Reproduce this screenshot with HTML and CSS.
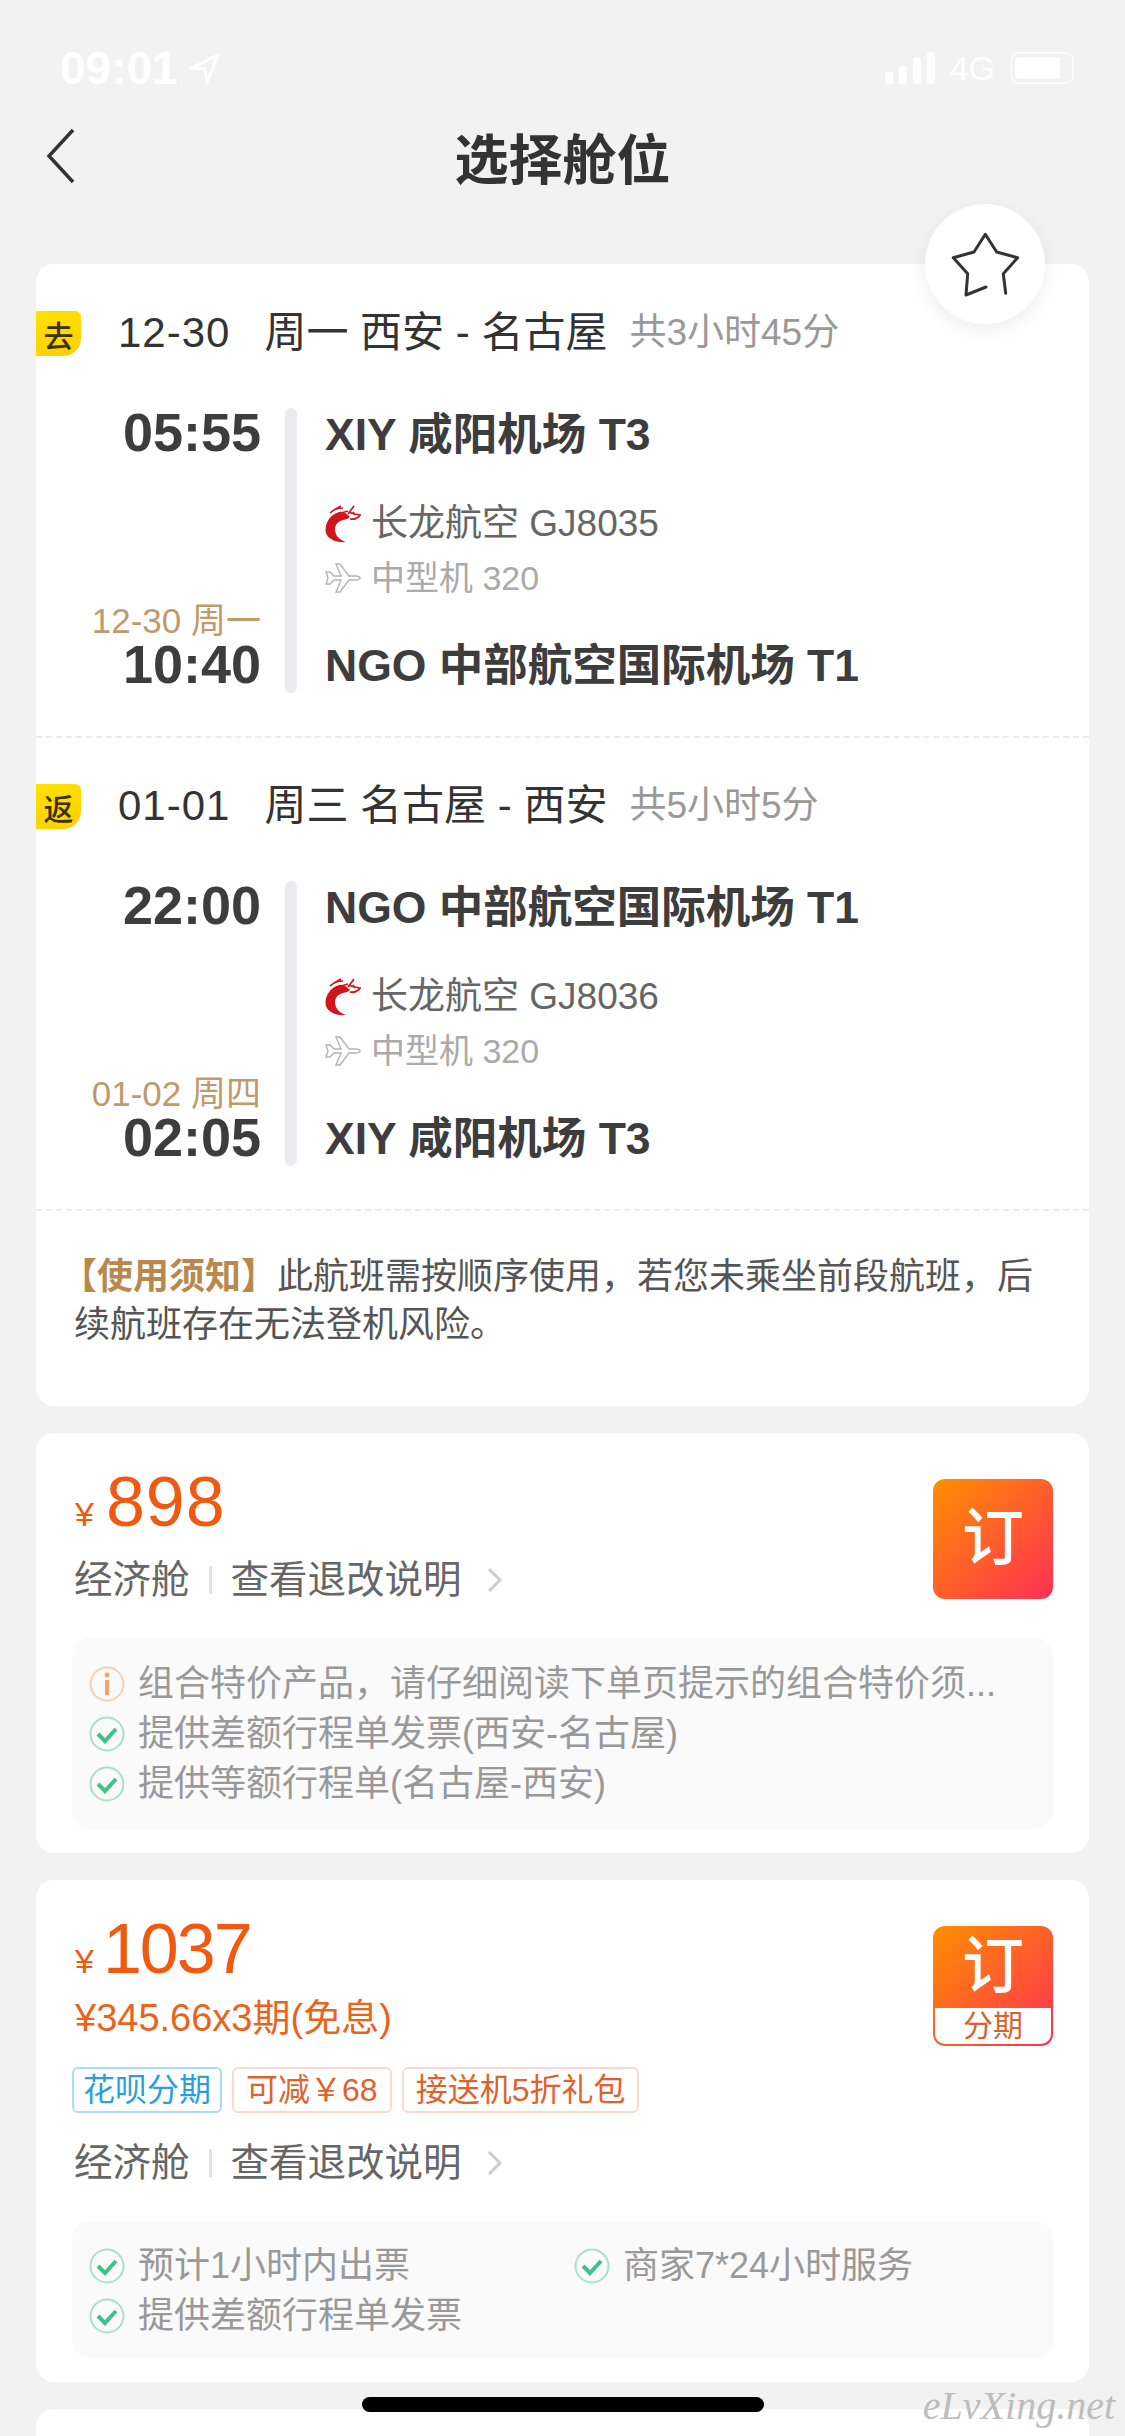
FILE: index.html
```html
<!DOCTYPE html>
<html lang="zh-CN">
<head>
    <meta charset="UTF-8">
    <meta name="viewport" content="width=device-width, initial-scale=1.0">
    <title>选择舱位</title>
    <link rel="stylesheet" href="styles.css">
</head>
<body>
    <svg class="defs" width="0" height="0">
        <symbol id="check" viewBox="0 0 36 40">
            <circle cx="18" cy="20" r="16.5" fill="none" stroke="#a9e0c9" stroke-width="2"/>
            <path d="M9 20l7 7 11-12" fill="none" stroke="#3fc08c" stroke-width="4"/>
        </symbol>
        <symbol id="logo" viewBox="0 0 36 38">
            <path d="M14 7C4 10-1 20 1 28c2 6 10 10 20 9-7-2-11-7-11-13 0-5 4-8 8-9 3-1 5-1 7-3-3-3-7-6-11-5z" fill="#d2141c"/>
            <path d="M5 8c3-3 8-5 13-5M9 5l7-4M16 8l7-2M23 9l6-8M24 7c3 2 7 2 11 3-1 2-5 5-10 4M28 7l2 3" fill="none" stroke="#d2141c" stroke-width="1.7"/>
        </symbol>
        <symbol id="plane" viewBox="0 0 36 30">
            <path d="M1 9l4 0 4 4 7 0-5-12 4 0 9 12 6 0c3 0 5 1 5 2s-2 2-5 2l-6 0-9 12-4 0 5-12-7 0-4 4-4 0 2-6z" fill="none" stroke="#b4b4b4" stroke-width="1.4"/>
        </symbol>
        <symbol id="chevron" viewBox="0 0 16 26">
            <path d="M2 2l11 11-11 11" fill="none" stroke="#ccc" stroke-width="3"/>
        </symbol>
    </svg>

    <div class="page">
        <div class="status-bar">
            <div class="status-left">
                <span class="clock">09:01</span>
                <svg width="32" height="32" viewBox="0 0 32 32"><path d="M29 3L3 16l13 1 2 13z" fill="none" stroke="#fff" stroke-width="3"/></svg>
            </div>
            <div class="status-right">
                <div class="signal"><i></i><i></i><i></i><i></i></div>
                <span class="network">4G</span>
                <div class="battery"><b></b></div>
            </div>
        </div>

        <header class="nav">
            <svg class="back" width="30" height="56" viewBox="0 0 30 56"><path d="M27 2L3 28l24 26" fill="none" stroke="#333" stroke-width="3.5"/></svg>
            <h1>选择舱位</h1>
        </header>

        <div class="fav">
            <svg width="71" height="67" viewBox="0 0 71 67"><path d="M36 56L16 64l1.700-21.300L3.300 26.700 24 21 35.300 3.300 46.700 21l21 5.700-14.400 16 2.400 19.600" fill="none" stroke="#333" stroke-width="3" stroke-linejoin="round" stroke-linecap="round"/></svg>
        </div>

        <section class="card trip">
            <div class="leg">
                <div class="leg-head">
                    <span class="leg-tag">去</span>
                    <span class="leg-date">12-30<span class="leg-week">周一 西安 - 名古屋</span></span>
                    <span class="leg-total">共3小时45分</span>
                </div>
                <div class="flight">
                    <div class="times">
                        <div class="time">05:55</div>
                        <div class="arrive">
                            <div class="arrive-date">12-30 周一</div>
                            <div class="time">10:40</div>
                        </div>
                    </div>
                    <div class="bar"></div>
                    <div class="route">
                        <div class="airport">XIY 咸阳机场 T3</div>
                        <div class="airline"><svg class="row-icon"><use href="#logo"/></svg>长龙航空 GJ8035</div>
                        <div class="aircraft"><svg class="row-icon plane"><use href="#plane"/></svg>中型机 320</div>
                        <div class="airport last">NGO 中部航空国际机场 T1</div>
                    </div>
                </div>
            </div>
            <div class="leg">
                <div class="leg-head">
                    <span class="leg-tag">返</span>
                    <span class="leg-date">01-01<span class="leg-week">周三 名古屋 - 西安</span></span>
                    <span class="leg-total">共5小时5分</span>
                </div>
                <div class="flight">
                    <div class="times">
                        <div class="time">22:00</div>
                        <div class="arrive">
                            <div class="arrive-date">01-02 周四</div>
                            <div class="time">02:05</div>
                        </div>
                    </div>
                    <div class="bar"></div>
                    <div class="route">
                        <div class="airport">NGO 中部航空国际机场 T1</div>
                        <div class="airline"><svg class="row-icon"><use href="#logo"/></svg>长龙航空 GJ8036</div>
                        <div class="aircraft"><svg class="row-icon plane"><use href="#plane"/></svg>中型机 320</div>
                        <div class="airport last">XIY 咸阳机场 T3</div>
                    </div>
                </div>
            </div>
            <p class="notice"><strong>【使用须知】</strong>此航班需按顺序使用，若您未乘坐前段航班，后续航班存在无法登机风险。</p>
        </section>

        <section class="card fare">
            <div class="fare-main">
                <div class="fare-info">
                    <div class="price"><span class="yen">¥</span>898</div>
                    <div class="cabin">
                        <span>经济舱</span><i class="sep"></i><span>查看退改说明</span><svg class="chevron"><use href="#chevron"/></svg>
                    </div>
                </div>
                <div class="book"><div class="book-main">订</div></div>
            </div>
            <div class="perks">
                <div class="perk">
                    <svg class="perk-icon" viewBox="0 0 36 40"><circle cx="18" cy="20" r="16.5" fill="none" stroke="#f6cfae" stroke-width="2"/><circle cx="18" cy="11" r="2.4" fill="#f2a46a"/><rect x="16" y="16" width="4" height="15" fill="#f2a46a"/></svg>
                    组合特价产品，请仔细阅读下单页提示的组合特价须...
                </div>
                <div class="perk"><svg class="perk-icon"><use href="#check"/></svg>提供差额行程单发票(西安-名古屋)</div>
                <div class="perk"><svg class="perk-icon"><use href="#check"/></svg>提供等额行程单(名古屋-西安)</div>
            </div>
        </section>

        <section class="card fare">
            <div class="fare-main">
                <div class="fare-info">
                    <div class="price tight"><span class="yen">¥</span>1037</div>
                    <div class="installment">¥345.66x3期(免息)</div>
                    <div class="tags">
                        <span class="tag blue">花呗分期</span>
                        <span class="tag">可减￥68</span>
                        <span class="tag">接送机5折礼包</span>
                    </div>
                    <div class="cabin">
                        <span>经济舱</span><i class="sep"></i><span>查看退改说明</span><svg class="chevron"><use href="#chevron"/></svg>
                    </div>
                </div>
                <div class="book">
                    <div class="book-main short">订</div>
                    <div class="book-sub">分期</div>
                </div>
            </div>
            <div class="perks two-col">
                <div class="perk"><svg class="perk-icon"><use href="#check"/></svg>预计1小时内出票</div>
                <div class="perk"><svg class="perk-icon"><use href="#check"/></svg>商家7*24小时服务</div>
                <div class="perk"><svg class="perk-icon"><use href="#check"/></svg>提供差额行程单发票</div>
            </div>
        </section>

        <section class="card next"></section>

        <div class="home-bar"></div>
        <div class="watermark">eLvXing.net</div>
    </div>
</body>
</html>
```
FILE: styles.css
```css
* {
    box-sizing: border-box;
}
html, body {
    margin: 0;
    padding: 0;
}
body {
    font-family: "Liberation Sans", "Noto Sans CJK SC", sans-serif;
    background-color: #f2f2f2;
    color: #333;
}
.defs {
    position: absolute;
}
.page {
    position: relative;
    width: 1125px;
    height: 2436px;
    overflow: hidden;
    padding: 0 36px;
}

/* status bar */
.status-bar {
    display: flex;
    justify-content: space-between;
    align-items: center;
    height: 110px;
    padding: 26px 15px 0 24px;
    color: #fff;
}
.status-left, .status-right {
    display: flex;
    align-items: center;
}
.status-left svg {
    margin-left: 11px;
}
.clock {
    font-size: 46px;
    font-weight: 700;
}
.signal {
    display: flex;
    align-items: flex-end;
    gap: 6px;
    height: 32px;
}
.signal i {
    display: block;
    width: 8px;
    background-color: #fff;
    border-radius: 2px;
}
.signal i:nth-child(1) { height: 12px; }
.signal i:nth-child(2) { height: 18px; }
.signal i:nth-child(3) { height: 26px; }
.signal i:nth-child(4) { height: 32px; }
.network {
    font-size: 34px;
    margin: 0 15px;
}
.battery {
    position: relative;
    width: 64px;
    height: 32px;
    border: 2px solid rgba(255, 255, 255, 0.6);
    border-radius: 8px;
    padding: 3px;
}
.battery b {
    display: block;
    width: 45px;
    height: 100%;
    background-color: #fff;
    border-radius: 3px;
}

/* nav */
.nav {
    display: grid;
    grid-template-columns: 1fr auto 1fr;
    align-items: center;
    height: 100px;
    margin: 0 -36px;
    padding: 0 46px;
}
.back {
    margin-top: -8px;
}
.nav h1 {
    margin: 0;
    padding-top: 3px;
    font-size: 54px;
    line-height: 97px;
    font-weight: 700;
    color: #333;
}
.fav {
    position: absolute;
    left: 925px;
    top: 204px;
    width: 120px;
    height: 120px;
    display: flex;
    align-items: center;
    justify-content: center;
    background-color: #fff;
    border-radius: 50%;
    box-shadow: 0 6px 18px rgba(0, 0, 0, 0.07);
    z-index: 2;
}

/* cards */
.card {
    background-color: #fff;
    border-radius: 18px;
    margin-top: 54px;
}
.card + .card {
    margin-top: 27px;
}

/* trip summary */
.trip {
    padding-top: 47px;
}
.leg {
    padding-bottom: 43px;
    margin-bottom: 46px;
    border-bottom: 2px dashed #ececec;
}
.leg-head {
    display: flex;
    align-items: center;
    height: 45px;
}
.leg-tag {
    width: 45px;
    height: 45px;
    margin-right: 37px;
    display: flex;
    align-items: center;
    justify-content: center;
    font-size: 30px;
    font-weight: 500;
    color: #3a3000;
    background: linear-gradient(160deg, #ffe100, #ffcf00);
    border-radius: 0 6px 18px 0;
}
.leg-date {
    margin-top: -10px;
    font-size: 42px;
    letter-spacing: 1px;
    color: #333;
    white-space: nowrap;
}
.leg-week {
    margin-left: 34px;
    letter-spacing: 0;
}
.leg-total {
    margin: -10px 0 0 22px;
    font-size: 37px;
    color: #999;
}
.flight {
    display: flex;
    height: 285px;
    margin-top: 52px;
}
.times {
    display: flex;
    flex-direction: column;
    justify-content: space-between;
    width: 225px;
    padding-bottom: 5px;
    text-align: right;
}
.time {
    font-size: 54px;
    line-height: 48px;
    font-weight: 700;
    color: #3d3d3d;
}
.arrive-date {
    font-size: 35px;
    line-height: 38px;
    color: #c09a6b;
}
.bar {
    width: 12px;
    margin: 0 28px 0 24px;
    background-color: #e9ebef;
    border-radius: 6px;
}
.route {
    flex: 1;
    display: flex;
    flex-direction: column;
    padding: 2px 0;
}
.airport {
    font-size: 44.500px;
    line-height: 50px;
    font-weight: 700;
    color: #3d3d3d;
    white-space: nowrap;
}
.airport.last {
    margin-top: auto;
}
.airline, .aircraft {
    display: flex;
    align-items: center;
    line-height: 54px;
    white-space: nowrap;
}
.airline {
    margin-top: 37px;
    font-size: 37px;
    color: #666;
}
.aircraft {
    font-size: 34px;
    color: #aaa;
}
.row-icon {
    width: 36px;
    height: 38px;
    margin-right: 10px;
}
.row-icon.plane {
    height: 30px;
}
.notice {
    margin: -4px 36px 0 38px;
    padding-bottom: 57px;
    font-size: 36px;
    line-height: 48px;
    color: #555;
}
.notice strong {
    display: inline-block;
    margin-left: -13px;
    color: #b9884d;
}

/* fares */
.fare {
    padding: 27px 36px 24px;
}
.fare-main {
    display: flex;
    justify-content: space-between;
    align-items: flex-start;
}
.fare-info {
    flex: 1;
}
.price {
    margin-left: 3px;
    padding-top: 2px;
    font-size: 70px;
    line-height: 80px;
    letter-spacing: 1px;
    color: #f0590f;
}
.price.tight {
    letter-spacing: -2px;
}
.yen {
    font-size: 34px;
    line-height: 1;
    margin-right: 11px;
}
.book {
    width: 120px;
    height: 120px;
    margin-top: 19px;
    border-radius: 12px;
    overflow: hidden;
    background: linear-gradient(135deg, #ff8f00, #ff2f55);
    color: #fff;
}
.book-main {
    height: 120px;
    font-size: 62px;
    font-weight: 500;
    line-height: 120px;
    text-align: center;
}
.book-main.short {
    height: 82px;
    line-height: 82px;
}
.book-sub {
    height: 36px;
    margin: 0 2px;
    background-color: #fff;
    border-radius: 0 0 10px 10px;
    color: #d9622c;
    font-size: 30px;
    line-height: 36px;
    text-align: center;
}
.installment {
    margin: 4px 0 0 3px;
    font-size: 38px;
    line-height: 50px;
    color: #e8641c;
}
.tags {
    display: flex;
    gap: 10px;
    margin-top: 24px;
}
.tag {
    height: 46px;
    padding: 0 12px;
    border: 2px solid #fbd9d3;
    border-radius: 6px;
    font-size: 32px;
    line-height: 42px;
    color: #e0622a;
}
.tag.blue {
    padding: 0 9px;
    border-color: #abdcf3;
    color: #2a9fdc;
}
.cabin {
    display: flex;
    align-items: center;
    margin: 13px 0 33px 2px;
    font-size: 38.500px;
    line-height: 50px;
    color: #666;
}
.tags + .cabin {
    margin-top: 25px;
}
.sep {
    width: 3px;
    height: 28px;
    margin: 0 19px;
    background-color: #e2e2e2;
}
.chevron {
    width: 16px;
    height: 26px;
    margin-left: 25px;
}
.perks {
    background-color: #fafafa;
    border-radius: 18px;
    padding: 21px 17px 20px;
}
.perks.two-col {
    display: grid;
    grid-template-columns: 485px 1fr;
    padding: 20px 17px 17px;
}
.perk {
    display: flex;
    align-items: center;
    font-size: 36px;
    line-height: 50px;
    color: #999;
    white-space: nowrap;
}
.perk-icon {
    width: 36px;
    height: 40px;
    flex: none;
    margin-right: 13px;
}
.next {
    height: 200px;
}

/* overlays */
.home-bar {
    position: absolute;
    left: 362px;
    top: 2397px;
    width: 402px;
    height: 15px;
    background-color: #000;
    border-radius: 8px;
}
.watermark {
    position: absolute;
    right: 10px;
    top: 2382px;
    font-family: "Liberation Serif", serif;
    font-style: italic;
    font-size: 40px;
    color: #bdbdbd;
}
```
